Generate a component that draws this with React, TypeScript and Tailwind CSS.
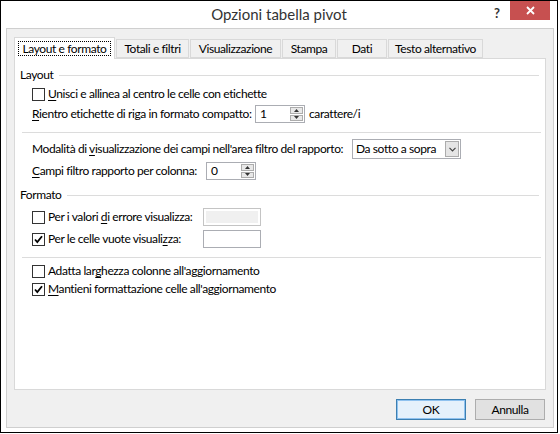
import type { ReactNode } from 'react';

const FONT = "font-['Lato','Liberation_Sans',sans-serif]";

function Check({ checked }: { checked?: boolean }) {
  return (
    <span className="flex h-[13px] w-[13px] shrink-0 items-center justify-center border border-[#333] bg-white">
      {checked && (
        <svg width="11" height="11" viewBox="0 0 11 11">
          <path d="M2 5.5 L4.3 8 L9 2.2" fill="none" stroke="#000" strokeWidth="1.8" />
        </svg>
      )}
    </span>
  );
}

function Spinner() {
  return (
    <div className="flex h-full w-[13px] flex-col gap-px py-px">
      <div className="flex flex-1 items-center justify-center border border-[#acacac] bg-[#e8e8e8]">
        <svg width="5" height="3" viewBox="0 0 5 3"><path d="M0 3 L2.5 0 L5 3 Z" fill="#333" /></svg>
      </div>
      <div className="flex flex-1 items-center justify-center border border-[#acacac] bg-[#e8e8e8]">
        <svg width="5" height="3" viewBox="0 0 5 3"><path d="M0 0 L2.5 3 L5 0 Z" fill="#333" /></svg>
      </div>
    </div>
  );
}

function SpinBox({ value, width }: { value: string; width: string }) {
  return (
    <div className={`flex h-[18px] shrink-0 items-center justify-between border border-[#abadb3] bg-white pl-[4px] pr-px ${width}`}>
      <span className="leading-none">{value}</span>
      <Spinner />
    </div>
  );
}

function Header({ children }: { children: ReactNode }) {
  return (
    <div className="flex h-[16px] items-center gap-[6px] pl-[5px] pr-[6px]">
      <span>{children}</span>
      <div className="h-px flex-1 bg-[#dcdcdc]" />
    </div>
  );
}

function Separator({ className }: { className: string }) {
  return <div className={`ml-[7px] mr-[4px] h-px bg-[#dcdcdc] ${className}`} />;
}

function Key({ children }: { children: ReactNode }) {
  return <span className="underline underline-offset-2">{children}</span>;
}

export default function App() {
  const tabs = [
    { label: 'Totali e filtri', w: 'w-[73px]' },
    { label: 'Visualizzazione', w: 'w-[91px]' },
    { label: 'Stampa', w: 'w-[54px]' },
    { label: 'Dati', w: 'w-[50px]' },
    { label: 'Testo alternativo', w: 'w-[95px]' },
  ];

  return (
    <div className={`h-[434px] w-[560px] whitespace-nowrap bg-white text-[12px] tracking-[-0.4px] text-black ${FONT}`}>
      <div className="flex h-[433px] w-[558px] flex-col border border-black bg-white">
        {/* title bar */}
        <div className="relative flex h-[27px] items-center justify-center">
          <span className="text-[15px] tracking-normal text-[#333]">Opzioni tabella pivot</span>
          <span className="absolute left-[493px] top-[3px] text-[13px] font-bold text-[#333]">?</span>
          <div className="absolute left-[509px] top-0 flex h-[19px] w-[40px] items-center justify-center bg-[#c75050]">
            <svg width="9" height="9" viewBox="0 0 9 9">
              <path d="M1 1 L8 8 M8 1 L1 8" stroke="#fff" strokeWidth="1.8" />
            </svg>
          </div>
        </div>

        {/* dialog body */}
        <div className="ml-[5px] mr-[3px] flex h-[400px] flex-col border border-[#cfcfcf] bg-[#f0f0f0]">
          <div className="mx-[7px] mt-[8px] flex h-[21px] items-end">
            <div className="relative z-10 mb-[-1px] flex h-[22px] w-[101px] shrink-0 items-center justify-center border border-b-0 border-[#d9d9d9] bg-white">
              <span className="border border-dotted border-black px-[4px] leading-[13px]">Layout e formato</span>
            </div>
            {tabs.map((t) => (
              <div
                key={t.label}
                className={`ml-px flex h-[19px] shrink-0 items-center justify-center border border-[#d9d9d9] bg-[#f0f0f0] ${t.w}`}
              >
                <span>{t.label}</span>
              </div>
            ))}
          </div>

          <div className="mx-[7px] flex h-[332px] flex-col border border-[#d9d9d9] bg-white">
            <div className="mt-[8px]">
              <Header>Layout</Header>
            </div>

            <div className="ml-[17px] mt-[3px] flex h-[16px] items-center gap-[3px]">
              <Check />
              <span><Key>U</Key>nisci e allinea al centro le celle con etichette</span>
            </div>

            <div className="ml-[17px] mt-[3px] flex h-[18px] items-center">
              <span className="w-[223px] shrink-0"><Key>R</Key>ientro etichette di riga in formato compatto:</span>
              <SpinBox value="1" width="w-[50px]" />
              <span className="ml-[4px]">carattere/i</span>
            </div>

            <Separator className="mt-[9px]" />

            <div className="ml-[17px] mt-[6px] flex h-[20px] items-center">
              <span className="w-[320px] shrink-0">Modalità di <Key>v</Key>isualizzazione dei campi nell'area filtro del rapporto:</span>
              <div className="flex h-[20px] w-[109px] shrink-0 items-center justify-between border border-[#abadb3] bg-white pl-[3px] pr-px">
                <span>Da sotto a sopra</span>
                <div className="flex h-[16px] w-[14px] items-center justify-center border border-[#acacac] bg-[#e5e5e5]">
                  <svg width="7" height="5" viewBox="0 0 7 5"><path d="M0.5 0.8 L3.5 3.8 L6.5 0.8" fill="none" stroke="#444" strokeWidth="1.2" /></svg>
                </div>
              </div>
            </div>

            <div className="ml-[17px] mt-[3px] flex h-[18px] items-center">
              <span className="w-[174px] shrink-0"><Key>C</Key>ampi filtro rapporto per colonna:</span>
              <SpinBox value="0" width="w-[50px]" />
            </div>

            <div className="mt-[7px]">
              <Header>Formato</Header>
            </div>

            <div className="ml-[17px] mt-[5px] flex h-[18px] items-center">
              <Check />
              <span className="ml-[3px] w-[155px] shrink-0">Per i valori <Key>d</Key>i errore visualizza:</span>
              <div className="h-[18px] w-[58px] shrink-0 border border-[#c4c4c4] bg-white p-[2px]">
                <div className="h-full w-full bg-[#f0f0f0]" />
              </div>
            </div>

            <div className="ml-[17px] mt-[4px] flex h-[18px] items-center">
              <Check checked />
              <span className="ml-[3px] w-[155px] shrink-0">Per le celle vuote visuali<Key>z</Key>za:</span>
              <div className="h-[18px] w-[58px] shrink-0 border border-[#abadb3] bg-white" />
            </div>

            <Separator className="mt-[9px]" />

            <div className="ml-[17px] mt-[5px] flex h-[16px] items-center gap-[3px]">
              <Check />
              <span>Adatta lar<Key>g</Key>hezza colonne all'aggiornamento</span>
            </div>

            <div className="ml-[17px] mt-[2px] flex h-[16px] items-center gap-[3px]">
              <Check checked />
              <span><Key>M</Key>antieni formattazione celle all'aggiornamento</span>
            </div>
          </div>

          <div className="mr-[8px] mt-[9px] flex justify-end gap-[9px]">
            <button className="flex h-[21px] w-[70px] items-center justify-center border border-[#3c7fb1] bg-[#e5f1fb] outline outline-1 -outline-offset-2 outline-[#8fc2ef]">
              OK
            </button>
            <button className="flex h-[21px] w-[70px] items-center justify-center border border-[#adadad] bg-[#e1e1e1]">
              Annulla
            </button>
          </div>
        </div>
      </div>
    </div>
  );
}
